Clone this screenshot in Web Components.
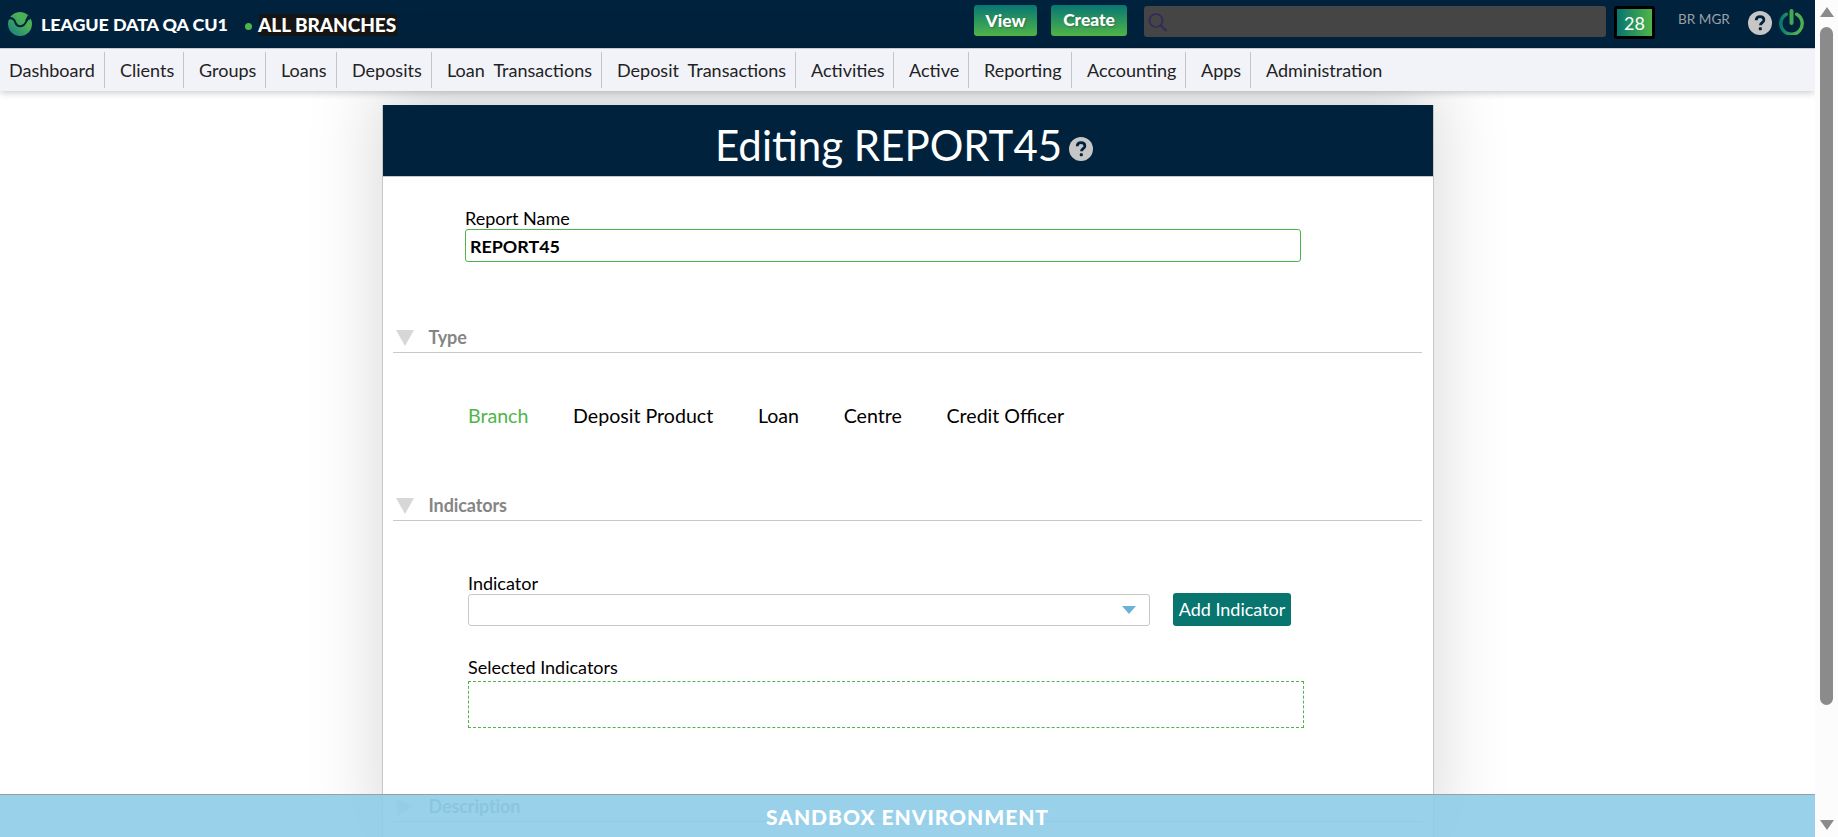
<!DOCTYPE html>
<html lang="en"><head><meta charset="utf-8"><title>Editing REPORT45</title>
<style>
html,body{margin:0;height:100%;overflow:hidden;background:#fff;font-family:Lato,"Liberation Sans",sans-serif;color:#000}
</style></head><body><app-shell></app-shell>
<script>
function define(name, html){
  const t=document.createElement('template'); t.innerHTML=html;
  customElements.define(name, class extends HTMLElement{
    constructor(){super();this.attachShadow({mode:'open'}).append(t.content.cloneNode(true));}
  });
}
define('help-icon',`<style>:host{display:block;width:24px;height:24px}svg{display:block}</style>
<svg width="24" height="24" viewBox="0 0 24 24"><circle cx="12" cy="12" r="12" fill="#c6c6c6"/><path d="M8.2 9.3C8.3 6.9 9.8 5.7 12 5.7c2.300 0 3.900 1.200 3.900 3.200 0 2.600-3.500 2.800-3.500 5.400" fill="none" stroke="#00223d" stroke-width="2.700"/><rect x="10.800" y="16.200" width="3" height="3" rx=".8" fill="#00223d"/></svg>`);
define('brand-logo',`<style>:host{display:block;width:24px;height:24px}svg{display:block}</style>
<svg width="24" height="24" viewBox="0 0 24 24"><defs><linearGradient id="g" x1="0" y1="1" x2="1" y2="0"><stop offset="0" stop-color="#167c86"/><stop offset=".65" stop-color="#4cb153"/><stop offset="1" stop-color="#46a85c"/></linearGradient></defs>
<circle cx="12" cy="12" r="12" fill="url(#g)"/><path d="M0 6.500C4 5.200 6.500 7.500 7.500 10.900c.7 2 2.300 3.300 4.500 3.300 3 0 4.800-1.600 6-4.400.8-2 1.800-3.200 4.500-3.800" fill="none" stroke="#00223d" stroke-width="2"/><path d="M17 8.800 20 3l3.500 3-3 1.500z" fill="#00223d"/></svg>`);
define('power-icon',`<style>:host{display:block;width:25px;height:26px}svg{display:block}</style>
<svg width="25" height="26" viewBox="0 0 25 26"><defs><linearGradient id="p"><stop offset="0" stop-color="#08796f"/><stop offset=".7" stop-color="#4caf50"/></linearGradient></defs><path d="M7.300 5.200A10.700 10.700 0 1 0 17.700 5.200" fill="none" stroke="url(#p)" stroke-width="3.400" stroke-linecap="round"/><path d="M12.500 2v12" stroke="#43a854" stroke-width="4" stroke-linecap="round"/></svg>`);
define('gradient-button',`<style>:host{display:flex;align-items:center;justify-content:center;box-sizing:border-box;height:31px;border-radius:3px;background:linear-gradient(#087673,#4fb548);color:#fff;font:900 17.400px/20px Lato,sans-serif;text-shadow:1px 1px 2px #3336;white-space:nowrap}</style><slot></slot>`);
define('top-bar',`<style>
:host{display:flex;height:48px;background:#00223d;color:#fff;align-items:flex-start}
brand-logo{margin:12px 0 0 8px}
.org{width:204px;margin:13px 0 0 9px;font:900 17.900px/22px Lato,sans-serif;letter-spacing:-.1px;white-space:nowrap}
.dot{width:7px;height:7px;border-radius:50%;background:#4fb548;margin:23px 0 0 0}
.branch{margin:14px 0 0 7px;width:138px;height:22px;background:#151515;font:900 19px/22px Lato,sans-serif;letter-spacing:-.05px;text-indent:-1px;white-space:nowrap}
.view{width:63px;margin:5px 0 0 577px}.create{width:76px;margin:5px 0 0 14px;padding-bottom:1px}
.search{width:462px;height:31px;margin:6px 0 0 17px;background:#454545;border-radius:3px}
.search svg{display:block;margin:7px 0 0 4px}
.count{box-sizing:border-box;width:41px;height:33px;margin:6px 0 0 8px;border:3px solid #000;border-radius:3px;background:linear-gradient(90deg,#08756f,#4fb548);font:18px/29px Lato,sans-serif;text-align:center}
.user{width:70px;margin:10px 0 0 23px;font:13.600px/19px Lato,sans-serif;color:#9aa0a5;white-space:nowrap}
help-icon{margin:11px 0 0 0}power-icon{margin:9px 0 0 7px}
</style>
<brand-logo></brand-logo><div class="org">LEAGUE DATA QA CU1</div><div class="dot"></div><div class="branch">ALL BRANCHES</div>
<gradient-button class="view">View</gradient-button><gradient-button class="create">Create</gradient-button>
<div class="search"><svg width="20" height="20" viewBox="0 0 20 20" fill="none" stroke="#35285f" stroke-width="1.700"><circle cx="8" cy="7.500" r="6.500"/><path d="m12.500 12 6 6" stroke-width="2.300"/></svg></div>
<div class="count">28</div><div class="user">BR MGR</div><help-icon></help-icon><power-icon></power-icon>`);
define('nav-item',`<style>:host{display:block;box-sizing:border-box;height:36px;border-right:1px solid #c4c5c9;padding-left:15px;font:18px/36px Lato,sans-serif;color:#222;white-space:pre}:host(:first-child){padding-left:9px}:host(:last-child){border:0}</style><slot></slot>`);
define('nav-bar',`<style>:host{display:flex;box-sizing:border-box;height:43px;border-top:1px solid #c8cacf;background:#f2f3f9;box-shadow:0 2px 7px #0003;padding-top:3px;position:relative}</style><slot></slot>`);
define('section-heading',`<style>:host{display:flex;align-items:center;box-sizing:border-box;height:32px;margin:0 11px 0 10px;border-bottom:1px solid #c9c9c9;color:#858585;font:bold 18px/32px Lato,sans-serif;letter-spacing:-.1px}
svg{margin:2px 14.500px 0 3px}:host([closed]) svg{transform:rotate(-90deg)}</style><svg width="18" height="16" viewBox="0 0 18 16"><path d="M0 0h18L9 16z" fill="#d7d7d7"/></svg><slot></slot>`);
define('type-tabs',`<style>:host{display:flex;gap:44.700px;font:19.600px/24px Lato,sans-serif;white-space:nowrap}::slotted([active]){color:#4fb548}</style><slot></slot>`);
define('field-label',`<style>:host{display:block;height:22px;font:18px/22px Lato,sans-serif;white-space:nowrap}</style><slot></slot>`);
define('text-field',`<style>:host{display:block;box-sizing:border-box;width:836px;height:33px;border:1px solid #4fb548;border-radius:3px;padding-left:4px;font:bold 17.900px/32px Lato,sans-serif}</style><slot></slot>`);
define('select-box',`<style>:host{display:flex;box-sizing:border-box;width:682px;height:32px;border:1px solid #c8c8c8;border-radius:3px;justify-content:flex-end;padding:11px 13px 0 0}</style><svg width="14" height="8"><path d="M0 0h14L7 8z" fill="#6cb2d8"/></svg>`);
define('report-panel',`<style>
:host{display:flex;flex-direction:column;box-sizing:border-box;width:1052px;height:760px;margin:14px 0 0 382px;border:1px solid #c8c8c8;border-top:0;background:#fff;box-shadow:0 -22px 70px #0000002b}
header{display:flex;box-sizing:border-box;height:72px;flex:none;background:#00223d;border-bottom:1px solid #c8c8c8;padding-left:332px;color:#fff}
h1{margin:0;font:42px/80px Lato,sans-serif;white-space:nowrap;width:354px}
header help-icon{margin-top:32px}
.name{margin:30px 0 0 82px}.type{margin-top:59px}.tabs{margin:51px 0 0 85px}.ind{margin-top:61px}
.body{margin:51px 0 0 85px}.row{display:flex;gap:23px;height:32px}
.add{box-sizing:border-box;width:118px;height:33px;margin-top:-1px;border-radius:3px;background:#08756f;color:#fff;text-align:center;font:18px/33px Lato,sans-serif;white-space:nowrap}
.sel{margin-top:30px}.drop{box-sizing:border-box;width:836px;height:47px;margin-top:3px;border:1px dashed #4fb548}
.desc{margin-top:62px}
</style>
<header><h1>Editing REPORT45</h1><help-icon></help-icon></header>
<div class="name"><field-label>Report Name</field-label><text-field>REPORT45</text-field></div>
<section-heading class="type">Type</section-heading>
<type-tabs class="tabs"><span active>Branch</span><span>Deposit Product</span><span>Loan</span><span>Centre</span><span>Credit Officer</span></type-tabs>
<section-heading class="ind">Indicators</section-heading>
<div class="body"><field-label>Indicator</field-label><div class="row"><select-box></select-box><div class="add">Add Indicator</div></div>
<field-label class="sel">Selected Indicators</field-label><div class="drop"></div></div>
<section-heading class="desc" closed>Description</section-heading>`);
define('env-banner',`<style>:host{display:block;position:absolute;z-index:3;left:0;bottom:0;width:1815px;height:43px;box-sizing:border-box;border-top:1px solid #999fa3;background:rgba(140,203,233,.89);color:#fff;text-align:center;font:900 21px/43px Lato,sans-serif;letter-spacing:.95px}</style><slot></slot>`);
define('scroll-bar',`<style>:host{display:flex;flex-direction:column;align-items:center;width:23px;height:837px;background:#fcfcfc}.thumb{width:13px;height:678px;border-radius:7px;background:#8b8b8b;margin:10px 0 115px}svg{flex:none}.up{margin-top:7px}</style><svg class="up" width="14" height="10"><path d="M7 0 14 10H0z" fill="#8b8b8b"/></svg><div class="thumb"></div><svg width="14" height="10"><path d="M0 0h14L7 10z" fill="#8b8b8b"/></svg>`);
define('app-shell',`<style>:host{display:flex;height:837px;position:relative;overflow:hidden}main{width:1815px;height:837px;overflow:hidden}nav-bar{z-index:2}</style>
<main><top-bar></top-bar><nav-bar>
<nav-item style="width:105px">Dashboard</nav-item><nav-item style="width:79px">Clients</nav-item><nav-item style="width:82px">Groups</nav-item><nav-item style="width:71px">Loans</nav-item><nav-item style="width:95px">Deposits</nav-item><nav-item style="width:170px">Loan  Transactions</nav-item><nav-item style="width:194px">Deposit  Transactions</nav-item><nav-item style="width:98px">Activities</nav-item><nav-item style="width:75px">Active</nav-item><nav-item style="width:103px">Reporting</nav-item><nav-item style="width:114px">Accounting</nav-item><nav-item style="width:65px">Apps</nav-item><nav-item style="width:160px">Administration</nav-item>
</nav-bar><report-panel></report-panel></main><scroll-bar></scroll-bar><env-banner>SANDBOX ENVIRONMENT</env-banner>`);
</script></body></html>
